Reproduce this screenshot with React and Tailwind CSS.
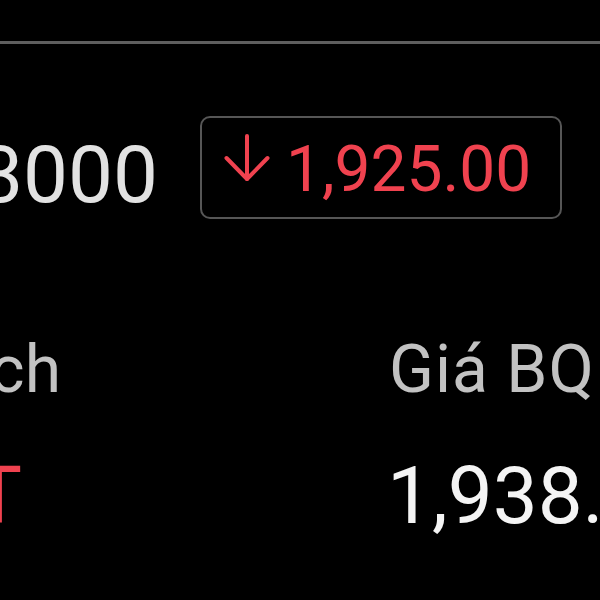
export default function App() {
  const font = { fontFamily: "Roboto, 'Noto Sans', sans-serif" };
  return (
    <div className="w-[600px] h-[600px] overflow-hidden bg-black flex flex-col" style={font}>
      <div className="mt-[41px] h-[3px] w-full bg-[#5e5e5e] shrink-0" />
      <div className="flex items-start shrink-0">
        <div className="w-[158px] mt-[91px] flex justify-end whitespace-nowrap text-[80px] leading-none text-[#e2e2e2]">
          3000
        </div>
        <div className="ml-[42px] mt-[72px] w-[362px] h-[103px] border-2 border-[#565656] rounded-[10px] flex items-start pl-[22px]">
          <svg width="46" height="48" viewBox="0 0 46 48" className="mt-[16px] shrink-0" fill="none" stroke="#f0424f" strokeWidth="4" strokeLinecap="round" strokeLinejoin="round">
            <path d="M23 2V45" />
            <path d="M2.5 24L23 45L43.5 24" />
          </svg>
          <div className="ml-[16px] mt-[20px] text-[64px] leading-none text-[#f0424f] whitespace-nowrap">
            1,925.00
          </div>
        </div>
      </div>
      <div className="flex items-start shrink-0 mt-[118px]">
        <div className="w-[61px] flex justify-end whitespace-nowrap text-[66px] leading-none text-[#c2c2c2]">
          Giao dịch
        </div>
        <div className="ml-[328px] whitespace-nowrap text-[66px] leading-none tracking-[1px] text-[#c2c2c2]">
          Giá BQ
        </div>
      </div>
      <div className="flex items-start shrink-0 mt-[53px]">
        <div className="w-[22px] flex justify-end whitespace-nowrap text-[80px] leading-none text-[#f0424f]">
          BÁN HẾT
        </div>
        <div className="ml-[365px] whitespace-nowrap text-[80px] leading-none text-[#f4f4f4]">
          1,938.00
        </div>
      </div>
    </div>
  );
}
